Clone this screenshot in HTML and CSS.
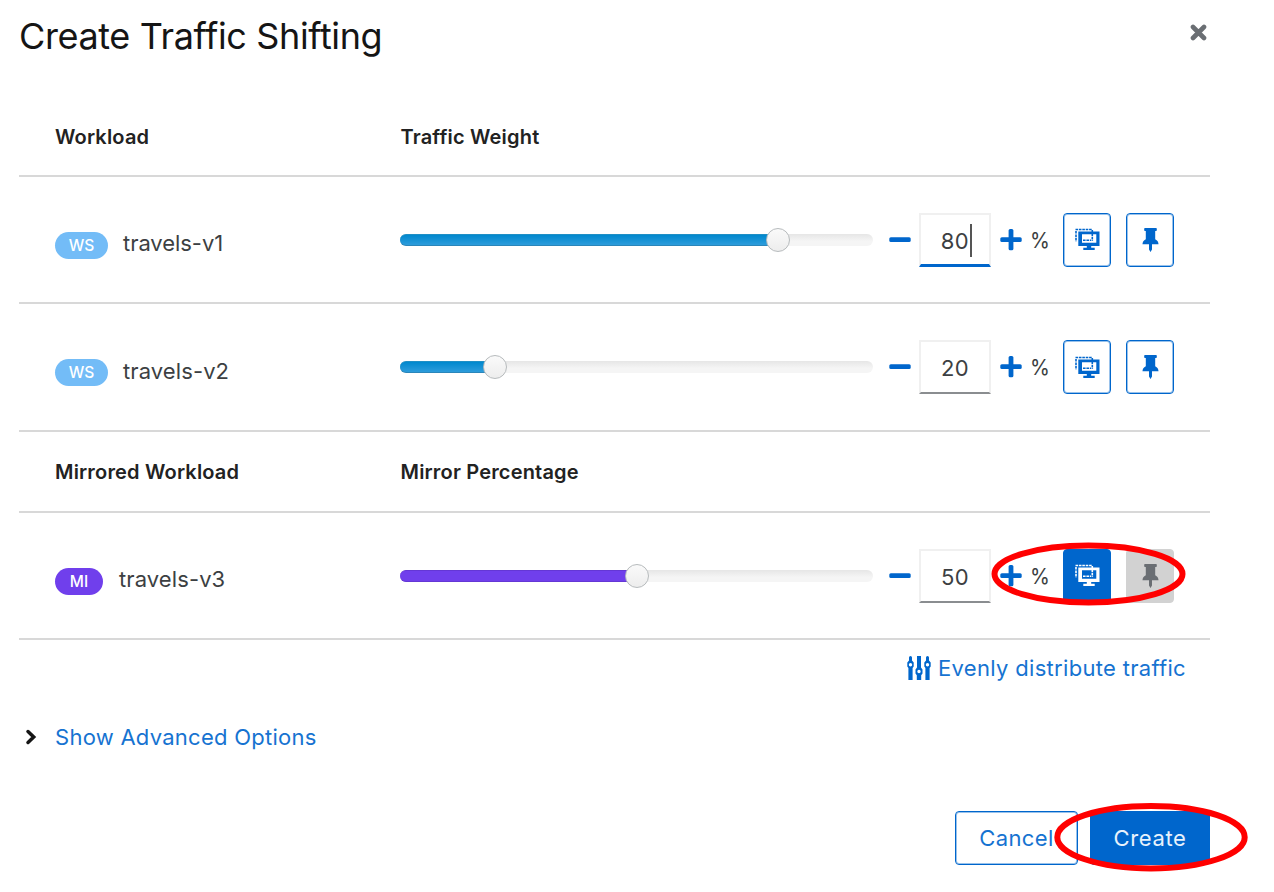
FILE: index.html
```html
<!DOCTYPE html>
<html lang="en">
<head>
<meta charset="utf-8">
<title>Create Traffic Shifting</title>
<link rel="stylesheet" href="styles.css">
</head>
<body>
<svg class="defs" width="0" height="0">
  <symbol id="minus" viewBox="0 0 22 24"><rect x=".3" y="9.200" width="21.400" height="4.800" rx="1.500"/></symbol>
  <symbol id="plus" viewBox="0 0 22 24"><rect x=".3" y="9.200" width="21.400" height="4.800" rx="1.500"/><rect x="8.600" y=".9" width="4.800" height="21.400" rx="1.500"/></symbol>
  <symbol id="pin" viewBox="0 0 17 24"><path d="M3 0h11q.8 0 .8.8v1.400q0 .8-.8.8h-.8v8.200c2.200 1 3.300 2.800 3.300 5H10v5.200L8.500 24 7 21.400V16.200H.5c0-2.200 1.100-4 3.300-5V3H3q-.8 0-.8-.8V.8Q2.200 0 3 0z"/></symbol>
  <symbol id="mirror" viewBox="0 0 26 23"><path fill-rule="evenodd" d="M4.300 3.500h21.200v14.600h-8.300v1.700h3.500v2.200H9.300v-2.200h3.500v-1.700H4.300zM8 6.300v8.500h14.300V6.300z"/><path d="M1.500 1.500h16.500M2 3v10.500M18.300 2v11M9 12.300h8" fill="none" stroke="currentColor" stroke-width="1.600" stroke-dasharray="2.600 .8"/></symbol>
  <symbol id="sliders" viewBox="0 0 24 24"><path fill-rule="evenodd" d="M2 1.500Q2 0 3.500 0T5 1.500V4.500l1.700 2v4L5.600 12v12H1.400V12L.3 10.500v-4L2 4.500zM3.500 7a1.700 1.700 0 1 0 0 3.400 1.700 1.700 0 0 0 0-3.400zM10 0h4v11.500l1.500 2v4l-1.300 1.700V24H9.800v-4.800L8.500 17.500v-4l1.500-2zM12 13.800a1.700 1.700 0 1 0 0 3.400 1.700 1.700 0 0 0 0-3.400zM19 1.500Q19 0 20.500 0T22 1.500V4.500l1.700 2v4L22.600 12v12h-4.200V12l-1.100-1.500v-4l1.700-2zM20.500 7a1.700 1.700 0 1 0 0 3.400 1.700 1.700 0 0 0 0-3.400z"/></symbol>
</svg>
<main class="modal">
  <header class="modal-header">
    <h1 class="title">Create Traffic Shifting</h1>
    <button class="close" aria-label="Close"><svg width="17" height="17" viewBox="0 0 17 17"><path d="M3 3l11 11M14 3L3 14" fill="none" stroke="#6a6e73" stroke-width="4.600" stroke-linecap="round"/></svg></button>
  </header>
  <section class="list">
    <div class="row head"><span>Workload</span><span>Traffic Weight</span></div>
    <div class="row item">
      <div class="name"><span class="badge ws">WS</span><span class="label v1">travels-v1</span></div>
      <div class="slider"><div class="fill" style="width:80%"></div><div class="knob" style="left:80%"></div></div>
      <svg class="step" width="22" height="24"><use href="#minus"/></svg>
      <div class="field focused">80<i class="caret"></i></div>
      <svg class="step" width="22" height="24"><use href="#plus"/></svg>
      <span class="percent">%</span>
      <button class="tool"><svg width="26" height="23"><use href="#mirror"/></svg></button>
      <button class="tool pin"><svg width="17" height="24"><use href="#pin"/></svg></button>
    </div>
    <div class="row item">
      <div class="name"><span class="badge ws">WS</span><span class="label">travels-v2</span></div>
      <div class="slider"><div class="fill" style="width:20%"></div><div class="knob" style="left:20%"></div></div>
      <svg class="step" width="22" height="24"><use href="#minus"/></svg>
      <div class="field">20</div>
      <svg class="step" width="22" height="24"><use href="#plus"/></svg>
      <span class="percent">%</span>
      <button class="tool"><svg width="26" height="23"><use href="#mirror"/></svg></button>
      <button class="tool pin"><svg width="17" height="24"><use href="#pin"/></svg></button>
    </div>
    <div class="row head mirrored"><span>Mirrored Workload</span><span>Mirror Percentage</span></div>
    <div class="row item">
      <div class="name"><span class="badge mi">MI</span><span class="label">travels-v3</span></div>
      <div class="slider purple"><div class="fill" style="width:50%"></div><div class="knob" style="left:50%"></div></div>
      <svg class="step" width="22" height="24"><use href="#minus"/></svg>
      <div class="field">50</div>
      <svg class="step" width="22" height="24"><use href="#plus"/></svg>
      <span class="percent">%</span>
      <button class="tool active"><svg width="26" height="23"><use href="#mirror"/></svg></button>
      <button class="tool pin disabled"><svg width="17" height="24"><use href="#pin"/></svg></button>
    </div>
  </section>
  <a class="even"><svg width="24" height="24"><use href="#sliders"/></svg><span>Evenly distribute traffic</span></a>
  <a class="advanced"><svg width="12" height="16" viewBox="0 0 12 16"><path d="M3 2.500L8.700 8 3 13.500" fill="none" stroke="#151515" stroke-width="3.500" stroke-linecap="round" stroke-linejoin="miter"/></svg><span>Show Advanced Options</span></a>
  <footer class="actions">
    <button class="btn cancel"><span>Cancel</span></button>
    <button class="btn create"><span>Create</span></button>
  </footer>
</main>
<svg class="annotations" width="1274" height="892"><ellipse cx="1088.500" cy="574" rx="94" ry="28.500"/><ellipse cx="1151" cy="837.200" rx="93.700" ry="31.200"/></svg>
</body>
</html>
```
FILE: styles.css
```css
* { box-sizing: border-box; }
body { margin: 0; width: 1274px; height: 892px; overflow: hidden; background: #fff; color: #3c3f42; font-family: Inter, "Liberation Sans", sans-serif; font-size: 22px; }
button { font: inherit; margin: 0; padding: 0; background: none; border: 0; }
.defs { position: absolute; }
svg { display: block; fill: currentColor; flex: none; }
.modal { padding: 0 64px 0 19px; height: 892px; display: flex; flex-direction: column; }
.modal-header { display: flex; justify-content: space-between; align-items: flex-start; height: 97.400px; padding: 14px 3px 0 0; }
.title { margin: 0; font-size: 36px; line-height: 44px; font-weight: 400; color: #151515; letter-spacing: -0.380px; white-space: nowrap; }
.close { padding-top: 10px; }
.list { display: flex; flex-direction: column; }
.row { border-bottom: 2px solid #d8d8d8; padding-left: 36px; display: flex; align-items: center; }
.head { height: 79.500px; font-size: 20px; font-weight: 600; color: #222; white-space: nowrap; letter-spacing: .18px; }
.head span { position: relative; top: .5px; }
.head span:first-child { width: 345.500px; flex: none; }
.mirrored { height: 81px; }
.item { height: 127.500px; }
.name { width: 345px; height: 28px; display: flex; align-items: center; padding-top: 11.500px; }
.badge { height: 27px; border-radius: 14px; color: #fff; font-size: 15.500px; font-weight: 500; line-height: 27px; text-align: center; }
.ws { width: 53px; background: #73bcf7; margin-right: 15px; }
.mi { width: 48px; background: #703fec; margin-right: 16px; }
.label { position: relative; top: -2px; white-space: nowrap; letter-spacing: .1px; }
.v1 { letter-spacing: -.05px; }
.slider { position: relative; width: 473px; height: 12px; border-radius: 6px; background: linear-gradient(#e6e6e6, #f5f5f5 60%); margin-right: 16px; }
.fill { height: 100%; border-radius: 6px 0 0 6px; background: linear-gradient(#0088ce, #2d9cdb); border-top: 1px solid #208fc5; border-bottom: 1px solid #2b86ba; }
.purple .fill { background: #703fec; border-color: #6437d5; }
.knob { position: absolute; top: -6px; width: 24px; height: 24px; margin-left: -12px; border-radius: 50%; border: 1.500px solid #b7bbbd; background: linear-gradient(#fafafa, #ededed); }
.field { position: relative; width: 72px; height: 54px; margin: 0 9px 0 8px; border: 2px solid #f0f0f0; border-bottom: 2px solid #8a8d90; line-height: 52px; text-align: center; letter-spacing: .4px; }
.focused { border-bottom: 3px solid #06c; }
.caret { position: absolute; left: 49px; top: 9px; width: 2px; height: 33px; background: #555; }
.step { color: #06c; }
.percent { width: 18px; margin: 0 15px 0 8px; font-size: 22px; transform: scaleX(.92); transform-origin: left; }
.tool { width: 48px; height: 54px; border: 1px solid #06c; box-shadow: inset 0 0 0 1px #99c2eb; border-radius: 4px; color: #06c; display: flex; align-items: center; justify-content: center; flex: none; margin-right: 15px; }
.tool.pin { margin-right: 0; }
.tool.active { background: #06c; color: #fff; box-shadow: none; }
.tool.disabled { background: #d2d2d2; border-color: #d2d2d2; box-shadow: none; color: #6a6e73; }
.even { display: flex; align-self: flex-end; align-items: center; gap: 7px; margin: 13.400px 24px 0 0; height: 28px; color: #06c; white-space: nowrap; letter-spacing: .31px; }
.even span, .advanced span, .btn span { color: #1673d1; }
.advanced { display: flex; align-items: center; gap: 18px; margin: 41px 0 0 6px; height: 28px; white-space: nowrap; letter-spacing: .26px; }
.actions { display: flex; justify-content: flex-end; gap: 12px; margin-top: 60px; }
.btn { height: 54px; border-radius: 4px; border: 1px solid #06c; box-shadow: inset 0 0 0 1px #99c2eb; letter-spacing: .4px; }
.cancel { width: 123px; }
.btn.create { width: 120px; background: #06c; box-shadow: none; letter-spacing: .6px; }
.btn.create span { color: #e8f2fc; }
.annotations { position: absolute; top: 0; left: 0; fill: none; stroke: #f00; stroke-width: 6px; pointer-events: none; }
```
